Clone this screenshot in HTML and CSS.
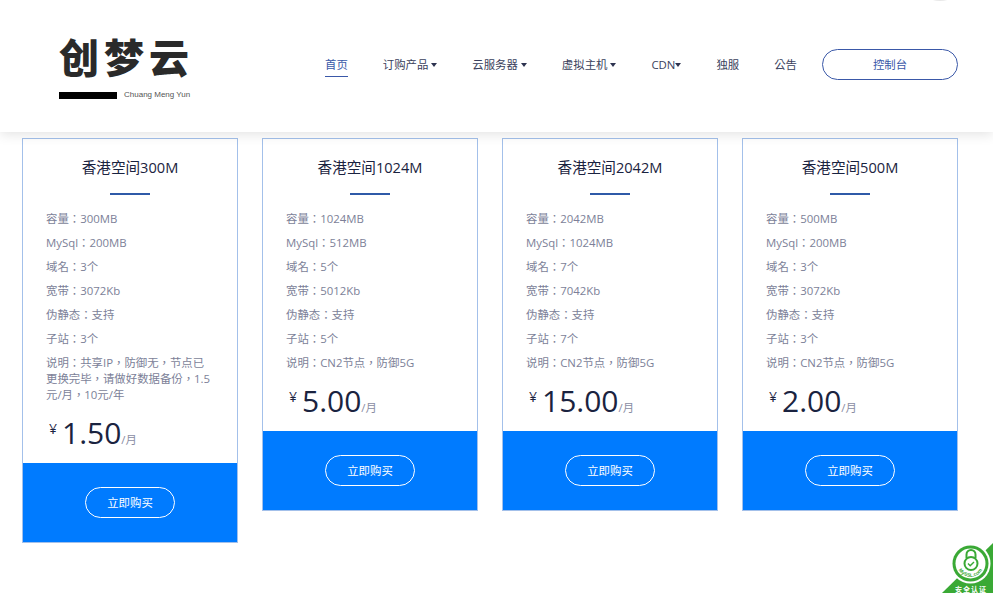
FILE: index.html
```html
<!DOCTYPE html>
<html lang="zh-TW">
<head>
    <meta charset="UTF-8">
    <title>创梦云</title>
    <link rel="stylesheet" href="styles.css">
</head>
<body>
    <header class="header">
        <div class="logo" lang="zh-CN">
            <div class="logo-name">创梦云</div>
            <div class="logo-sub">
                <span class="logo-bar"></span>
                <span>Chuang Meng Yun</span>
            </div>
        </div>
        <nav class="nav">
            <a class="nav-item active">首页</a>
            <a class="nav-item">订购产品 <i class="caret"></i></a>
            <a class="nav-item">云服务器 <i class="caret"></i></a>
            <a class="nav-item">虚拟主机 <i class="caret"></i></a>
            <a class="nav-item">CDN<i class="caret"></i></a>
            <a class="nav-item">独服</a>
            <a class="nav-item">公告</a>
            <a class="console-btn">控制台</a>
        </nav>
    </header>

    <main class="plans">
        <section class="plan">
            <div class="plan-body">
                <h3 class="plan-title">香港空间300M</h3>
                <div class="plan-rule"></div>
                <ul class="plan-specs">
                    <li>容量：300MB</li>
                    <li>MySql：200MB</li>
                    <li>域名：3个</li>
                    <li>宽带：3072Kb</li>
                    <li>伪静态：支持</li>
                    <li>子站：3个</li>
                    <li>说明：共享IP，防御无，节点已更换完毕，请做好数据备份，1.5元/月，10元/年</li>
                </ul>
                <div class="price"><sup class="yen">¥</sup><span class="amount">1.50</span><span class="unit">/月</span></div>
            </div>
            <div class="plan-foot"><a class="buy-btn">立即购买</a></div>
        </section>

        <section class="plan">
            <div class="plan-body">
                <h3 class="plan-title">香港空间1024M</h3>
                <div class="plan-rule"></div>
                <ul class="plan-specs">
                    <li>容量：1024MB</li>
                    <li>MySql：512MB</li>
                    <li>域名：5个</li>
                    <li>宽带：5012Kb</li>
                    <li>伪静态：支持</li>
                    <li>子站：5个</li>
                    <li>说明：CN2节点，防御5G</li>
                </ul>
                <div class="price"><sup class="yen">¥</sup><span class="amount">5.00</span><span class="unit">/月</span></div>
            </div>
            <div class="plan-foot"><a class="buy-btn">立即购买</a></div>
        </section>

        <section class="plan">
            <div class="plan-body">
                <h3 class="plan-title">香港空间2042M</h3>
                <div class="plan-rule"></div>
                <ul class="plan-specs">
                    <li>容量：2042MB</li>
                    <li>MySql：1024MB</li>
                    <li>域名：7个</li>
                    <li>宽带：7042Kb</li>
                    <li>伪静态：支持</li>
                    <li>子站：7个</li>
                    <li>说明：CN2节点，防御5G</li>
                </ul>
                <div class="price"><sup class="yen">¥</sup><span class="amount">15.00</span><span class="unit">/月</span></div>
            </div>
            <div class="plan-foot"><a class="buy-btn">立即购买</a></div>
        </section>

        <section class="plan">
            <div class="plan-body">
                <h3 class="plan-title">香港空间500M</h3>
                <div class="plan-rule"></div>
                <ul class="plan-specs">
                    <li>容量：500MB</li>
                    <li>MySql：200MB</li>
                    <li>域名：3个</li>
                    <li>宽带：3072Kb</li>
                    <li>伪静态：支持</li>
                    <li>子站：3个</li>
                    <li>说明：CN2节点，防御5G</li>
                </ul>
                <div class="price"><sup class="yen">¥</sup><span class="amount">2.00</span><span class="unit">/月</span></div>
            </div>
            <div class="plan-foot"><a class="buy-btn">立即购买</a></div>
        </section>
    </main>

    <div class="ssl-badge">
        <svg viewBox="0 0 51 50" width="51" height="50">
            <polygon points="51,0 51,50 0,50" fill="#3aa935"></polygon>
            <circle cx="28.5" cy="20.5" r="20" fill="#fff"></circle>
            <circle cx="28.5" cy="20.5" r="18" fill="#3aa935"></circle>
            <circle cx="28.5" cy="20.5" r="15" fill="#fff"></circle>
            <path d="M24.5 15v-3.5a4.5 4.5 0 0 1 9 0v3.5" fill="none" stroke="#3aa935" stroke-width="2"></path>
            <circle cx="29" cy="20.5" r="6.5" fill="none" stroke="#3aa935" stroke-width="2"></circle>
            <path d="M26 20.5l2.2 2.2 3.8-3.8" fill="none" stroke="#3aa935" stroke-width="1.4"></path>
            <path id="ssl-arc" d="M15.5 24a13.5 13.5 0 0 0 26 0" fill="none"></path>
            <text class="ssl-url"><textPath href="#ssl-arc" startOffset="50%" text-anchor="middle">MySSL.com</textPath></text>
            <text class="ssl-label" lang="zh-CN" x="29" y="48.5" text-anchor="middle">安全认证</text>
        </svg>
    </div>
</body>
</html>
```

FILE: styles.css
```css
* { margin: 0; padding: 0; box-sizing: border-box; }
html, body { height: 100%; overflow: hidden; }
body {
    position: relative;
    font-family: "Open Sans", "Noto Sans CJK TC", sans-serif;
    font-size: 11.4px;
    background: #fff;
    color: #1a2340;
}
.header {
    position: relative;
    height: 132px;
    padding: 0 35px 0 59px;
    display: flex;
    align-items: flex-start;
    justify-content: space-between;
    background: #fff;
    box-shadow: 0 2px 12px rgba(0, 0, 0, 0.12);
}
.header::before {
    content: "";
    position: absolute;
    top: -9px;
    left: 928px;
    width: 24px;
    height: 10px;
    border-radius: 50%;
    background: #e8e8e8;
}
.logo {
    width: 132px;
    padding-top: 31px;
}
.logo-name {
    font-family: "Noto Sans CJK SC", sans-serif;
    font-size: 40px;
    font-weight: 900;
    line-height: 50px;
    letter-spacing: 5px;
    white-space: nowrap;
    color: #2a2a2a;
    height: 59px;
}
.logo-sub {
    display: flex;
    align-items: center;
    gap: 7px;
    font-family: "Liberation Sans", sans-serif;
    font-size: 8px;
    line-height: 10px;
    color: #555;
    white-space: nowrap;
}
.logo-bar {
    width: 58px;
    height: 7px;
    background: #000;
}
.nav {
    display: flex;
    align-items: center;
    padding-top: 49px;
}
.nav-item {
    position: relative;
    margin-right: 35px;
    line-height: 30px;
    color: #3a3f5c;
    white-space: nowrap;
}
.nav-item.active { color: #3a58a8; }
.nav-item.active::after {
    content: "";
    position: absolute;
    left: 0;
    right: 0;
    bottom: 3px;
    height: 1px;
    background: #3a58a8;
}
.caret {
    display: inline-block;
    vertical-align: middle;
    width: 0;
    height: 0;
    border-top: 4px solid #2d3350;
    border-left: 3px solid transparent;
    border-right: 3px solid transparent;
}
.console-btn {
    width: 136px;
    height: 31px;
    margin-left: -10px;
    line-height: 29px;
    text-align: center;
    color: #3a58a8;
    border: 1px solid #3a58a8;
    border-radius: 16px;
}
.plans {
    display: grid;
    grid-template-columns: repeat(4, 216px);
    column-gap: 24px;
    align-items: start;
    padding: 6px 0 0 22px;
}
.plan {
    border: 1px solid #a3c0ea;
    background: #fff;
}
.plan-body { padding: 17px 23px 0; }
.plan-title {
    font-size: 14.6px;
    font-weight: 400;
    line-height: 22px;
    text-align: center;
    color: #1a2340;
}
.plan-rule {
    width: 40px;
    height: 2px;
    margin: 15px auto 16px;
    background: #2f5aa8;
}
.plan-specs {
    list-style: none;
    color: #7c7f98;
    line-height: 16px;
}
.plan-specs li { margin-top: 8px; }
.price {
    height: 60px;
    padding-top: 8px;
    line-height: 44px;
    color: #1a2340;
    white-space: nowrap;
}
.yen {
    font-size: 14px;
    margin: 0 5px 0 3px;
    vertical-align: 10px;
    line-height: 0;
}
.amount { font-size: 30px; }
.unit { font-size: 11.4px; color: #8a8da3; }
.plan-foot {
    height: 79px;
    padding-top: 24px;
    background: #007bff;
    text-align: center;
}
.buy-btn {
    display: inline-block;
    width: 90px;
    height: 31px;
    line-height: 29px;
    color: #fff;
    border: 1px solid #fff;
    border-radius: 16px;
}
.ssl-badge {
    position: absolute;
    right: 0;
    bottom: 0;
    width: 51px;
    height: 50px;
}
.ssl-badge svg { display: block; }
.ssl-url {
    font-family: "Liberation Sans", sans-serif;
    font-size: 5px;
    font-weight: 700;
    fill: #3aa935;
}
.ssl-label {
    font-family: "Noto Sans CJK SC", sans-serif;
    font-size: 7px;
    font-weight: 700;
    letter-spacing: 1px;
    fill: #fff;
}
```
